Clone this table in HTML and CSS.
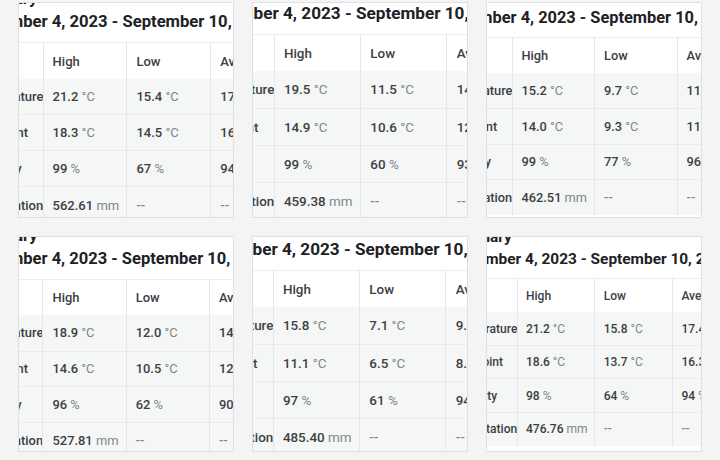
FILE: index.html
```html
<!DOCTYPE html>
<html lang="en">
<head>
<meta charset="utf-8">
<title>Weekly Summary</title>
<link rel="stylesheet" href="styles.css">
</head>
<body>
<main class="grid">

<section class="panel p1">
  <div class="sheet">
    <div class="title"><div>Summary</div><div>September 4, 2023 - September 10, 2023</div></div>
    <table class="tbl">
      <colgroup><col class="c-lab"><col class="c-val"><col class="c-val"><col class="c-val"></colgroup>
      <tr class="head"><th></th><th>High</th><th>Low</th><th>Average</th></tr>
      <tr><th>Temperature</th><td><b>21.2</b> <span class="u">°C</span></td><td><b>15.4</b> <span class="u">°C</span></td><td><b>17.9</b> <span class="u">°C</span></td></tr>
      <tr><th>Dew Point</th><td><b>18.3</b> <span class="u">°C</span></td><td><b>14.5</b> <span class="u">°C</span></td><td><b>16.4</b> <span class="u">°C</span></td></tr>
      <tr><th>Humidity</th><td><b>99</b> <span class="u">%</span></td><td><b>67</b> <span class="u">%</span></td><td><b>94</b> <span class="u">%</span></td></tr>
      <tr><th>Precipitation</th><td><b>562.61</b> <span class="u">mm</span></td><td class="na">--</td><td class="na">--</td></tr>
    </table>
  </div>
</section>

<section class="panel p2">
  <div class="sheet">
    <div class="title"><div>Summary</div><div>September 4, 2023 - September 10, 2023</div></div>
    <table class="tbl">
      <colgroup><col class="c-lab"><col class="c-val"><col class="c-val"><col class="c-val"></colgroup>
      <tr class="head"><th></th><th>High</th><th>Low</th><th>Average</th></tr>
      <tr><th>Temperature</th><td><b>19.5</b> <span class="u">°C</span></td><td><b>11.5</b> <span class="u">°C</span></td><td><b>14.8</b> <span class="u">°C</span></td></tr>
      <tr><th>Dew Point</th><td><b>14.9</b> <span class="u">°C</span></td><td><b>10.6</b> <span class="u">°C</span></td><td><b>12.9</b> <span class="u">°C</span></td></tr>
      <tr><th>Humidity</th><td><b>99</b> <span class="u">%</span></td><td><b>60</b> <span class="u">%</span></td><td><b>93</b> <span class="u">%</span></td></tr>
      <tr><th>Precipitation</th><td><b>459.38</b> <span class="u">mm</span></td><td class="na">--</td><td class="na">--</td></tr>
    </table>
  </div>
</section>

<section class="panel p3">
  <div class="sheet">
    <div class="title"><div>Summary</div><div>September 4, 2023 - September 10, 2023</div></div>
    <table class="tbl">
      <colgroup><col class="c-lab"><col class="c-val"><col class="c-val"><col class="c-val"></colgroup>
      <tr class="head"><th></th><th>High</th><th>Low</th><th>Average</th></tr>
      <tr><th>Temperature</th><td><b>15.2</b> <span class="u">°C</span></td><td><b>9.7</b> <span class="u">°C</span></td><td><b>11.9</b> <span class="u">°C</span></td></tr>
      <tr><th>Dew Point</th><td><b>14.0</b> <span class="u">°C</span></td><td><b>9.3</b> <span class="u">°C</span></td><td><b>11.2</b> <span class="u">°C</span></td></tr>
      <tr><th>Humidity</th><td><b>99</b> <span class="u">%</span></td><td><b>77</b> <span class="u">%</span></td><td><b>96</b> <span class="u">%</span></td></tr>
      <tr><th>Precipitation</th><td><b>462.51</b> <span class="u">mm</span></td><td class="na">--</td><td class="na">--</td></tr>
    </table>
  </div>
</section>

<section class="panel p4">
  <div class="sheet">
    <div class="title"><div>Summary</div><div>September 4, 2023 - September 10, 2023</div></div>
    <table class="tbl">
      <colgroup><col class="c-lab"><col class="c-val"><col class="c-val"><col class="c-val"></colgroup>
      <tr class="head"><th></th><th>High</th><th>Low</th><th>Average</th></tr>
      <tr><th>Temperature</th><td><b>18.9</b> <span class="u">°C</span></td><td><b>12.0</b> <span class="u">°C</span></td><td><b>14.9</b> <span class="u">°C</span></td></tr>
      <tr><th>Dew Point</th><td><b>14.6</b> <span class="u">°C</span></td><td><b>10.5</b> <span class="u">°C</span></td><td><b>12.2</b> <span class="u">°C</span></td></tr>
      <tr><th>Humidity</th><td><b>96</b> <span class="u">%</span></td><td><b>62</b> <span class="u">%</span></td><td><b>90</b> <span class="u">%</span></td></tr>
      <tr><th>Precipitation</th><td><b>527.81</b> <span class="u">mm</span></td><td class="na">--</td><td class="na">--</td></tr>
    </table>
  </div>
</section>

<section class="panel p5">
  <div class="sheet">
    <div class="title"><div>Summary</div><div>September 4, 2023 - September 10, 2023</div></div>
    <table class="tbl">
      <colgroup><col class="c-lab"><col class="c-val"><col class="c-val"><col class="c-val"></colgroup>
      <tr class="head"><th></th><th>High</th><th>Low</th><th>Average</th></tr>
      <tr><th>Temperature</th><td><b>15.8</b> <span class="u">°C</span></td><td><b>7.1</b> <span class="u">°C</span></td><td><b>9.8</b> <span class="u">°C</span></td></tr>
      <tr><th>Dew Point</th><td><b>11.1</b> <span class="u">°C</span></td><td><b>6.5</b> <span class="u">°C</span></td><td><b>8.4</b> <span class="u">°C</span></td></tr>
      <tr><th>Humidity</th><td><b>97</b> <span class="u">%</span></td><td><b>61</b> <span class="u">%</span></td><td><b>94</b> <span class="u">%</span></td></tr>
      <tr><th>Precipitation</th><td><b>485.40</b> <span class="u">mm</span></td><td class="na">--</td><td class="na">--</td></tr>
    </table>
  </div>
</section>

<section class="panel p6">
  <div class="sheet">
    <div class="title"><div>Summary</div><div>September 4, 2023 - September 10, 2023</div></div>
    <table class="tbl">
      <colgroup><col class="c-lab"><col class="c-val"><col class="c-val"><col class="c-val"></colgroup>
      <tr class="head"><th></th><th>High</th><th>Low</th><th>Average</th></tr>
      <tr><th>Temperature</th><td><b>21.2</b> <span class="u">°C</span></td><td><b>15.8</b> <span class="u">°C</span></td><td><b>17.4</b> <span class="u">°C</span></td></tr>
      <tr><th>Dew Point</th><td><b>18.6</b> <span class="u">°C</span></td><td><b>13.7</b> <span class="u">°C</span></td><td><b>16.3</b> <span class="u">°C</span></td></tr>
      <tr><th>Humidity</th><td><b>98</b> <span class="u">%</span></td><td><b>64</b> <span class="u">%</span></td><td><b>94</b> <span class="u">%</span></td></tr>
      <tr><th>Precipitation</th><td><b>476.76</b> <span class="u">mm</span></td><td class="na">--</td><td class="na">--</td></tr>
    </table>
  </div>
</section>

</main>
</body>
</html>
```

FILE: styles.css
```css
* { box-sizing: border-box; }

html, body {
  margin: 0;
  padding: 0;
  background: #f4f4f4;
}

body {
  width: 720px;
  height: 460px;
  overflow: hidden;
  font-family: Roboto, "Noto Sans", "Liberation Sans", sans-serif;
  color: #3c4043;
}

.grid {
  display: grid;
  grid-template-columns: repeat(3, 216px);
  grid-auto-rows: 216px;
  column-gap: 18px;
  row-gap: 18px;
  padding: 2px 0 0 18px;
}

.panel {
  overflow: hidden;
  background: #ffffff;
  border: 1px solid #e0e0e0;
}

.sheet {
  width: max-content;
}

.title {
  font-size: 1.28em;
  line-height: 1.41;
  font-weight: 700;
  color: #202124;
  white-space: nowrap;
  margin-left: 0.27em;
  margin-bottom: 0.52em;
}

.tbl {
  border-collapse: collapse;
  table-layout: fixed;
  width: 25.65em;
  border-top: 1px solid #ededed;
}

.c-lab { width: 6.3em; }
.c-val { width: 6.45em; }

.tbl tr { height: 2.77em; }

.tbl th,
.tbl td {
  padding: 0 0 0 0.7em;
  text-align: left;
  vertical-align: middle;
  white-space: nowrap;
  overflow: hidden;
  border-left: 1px solid #e6e6e6;
}

.tbl tr > :first-child {
  border-left: none;
  padding-left: 0.62em;
}

.tbl tr + tr {
  background: #f5f6f6;
  border-top: 1px solid #ebebeb;
}

.tbl tr.head + tr { border-top: none; }

.tbl th {
  font-weight: 500;
  color: #3c4043;
}

.tbl td b {
  font-weight: 500;
  color: #3c4043;
}

.tbl .u {
  font-weight: 400;
  color: #80868b;
}

.tbl .na {
  color: #80868b;
  font-weight: 500;
}

/* Per-panel crop windows into the same summary sheet */
.p1 { font-size: 13px; }
.p1 .sheet { margin: -16.3px 0 0 -57.9px; }

.p2 { font-size: 13.4px; }
.p2 .sheet { margin: -26.5px 0 0 -63.4px; }

.p3 { font-size: 12.8px; }
.p3 .sheet { margin: -20.6px 0 0 -55.6px; }

.p4 { font-size: 12.9px; }
.p4 .sheet { margin: -13px 0 0 -57.3px; }

.p5 { font-size: 13.4px; }
.p5 .sheet { margin: -24.5px 0 0 -64.4px; }

.p6 { font-size: 12.05px; }
.p6 .sheet { margin: -10.2px 0 0 -45.9px; }
```
